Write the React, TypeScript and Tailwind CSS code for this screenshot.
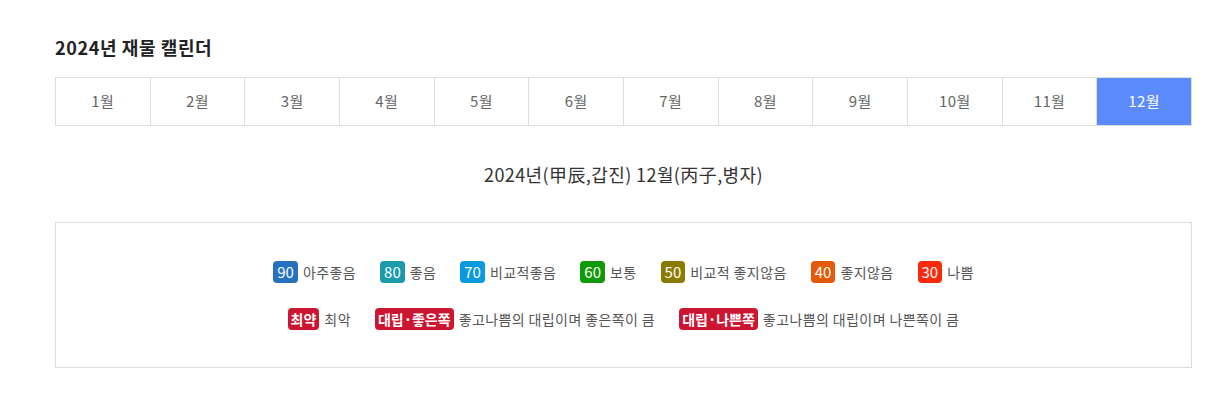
const months = ['1월', '2월', '3월', '4월', '5월', '6월', '7월', '8월', '9월', '10월', '11월', '12월'];

const scores = [
  { n: '90', label: '아주좋음', bg: 'bg-[#2672c0]' },
  { n: '80', label: '좋음', bg: 'bg-[#1a9aaa]' },
  { n: '70', label: '비교적좋음', bg: 'bg-[#0b9ae0]' },
  { n: '60', label: '보통', bg: 'bg-[#109a06]' },
  { n: '50', label: '비교적 좋지않음', bg: 'bg-[#8a7a00]' },
  { n: '40', label: '좋지않음', bg: 'bg-[#e45a0a]' },
  { n: '30', label: '나쁨', bg: 'bg-[#fc2a0a]' },
];

const specials = [
  { tag: '최약', label: '최악' },
  { tag: '대립·좋은쪽', label: '좋고나쁨의 대립이며 좋은쪽이 큼' },
  { tag: '대립·나쁜쪽', label: '좋고나쁨의 대립이며 나쁜쪽이 큼' },
];

export default function App() {
  return (
    <div className="w-[1228px] h-[402px] bg-white pl-[55px] pr-[36px] pt-[35px] font-['Noto_Sans_CJK_KR','Noto_Sans',sans-serif]">
      <h2 className="text-[18px] font-bold text-[#222] leading-[24px] tracking-[0.6px]">2024년 재물 캘린더</h2>

      {/* month tabs */}
      <div className="mt-[18px] grid grid-cols-12 border-l border-t border-[#dddddd]">
        {months.map((m, i) => (
          <div
            key={m}
            className={`h-[48px] flex items-center justify-center text-[15px] tracking-[0.4px] border-r border-b border-[#dddddd] ${
              i === 11 ? 'bg-[#5b8afc] text-white border-[#5b8afc]' : 'text-[#666]'
            }`}
          >
            {m}
          </div>
        ))}
      </div>

      <p className="mt-[36px] text-center text-[18px] text-[#333] leading-[24px] tracking-[0.4px]">2024년(甲辰,갑진) 12월(丙子,병자)</p>

      {/* legend */}
      <div className="mt-[36px] h-[146px] border border-[#dddddd] flex flex-col items-center pt-[38px] gap-[25px]">
        <div className="flex items-center gap-[24px]">
          {scores.map((s) => (
            <div key={s.n} className="flex items-center gap-[5px]">
              <span className={`${s.bg} text-white text-[15px] leading-[22px] h-[22px] px-[4px] rounded-[4px]`}>{s.n}</span>
              <span className="text-[14px] text-[#555] tracking-[0.4px]">{s.label}</span>
            </div>
          ))}
        </div>
        <div className="flex items-center gap-[24px]">
          {specials.map((s) => (
            <div key={s.tag} className="flex items-center gap-[5px]">
              <span className="bg-[#cc1530] text-white text-[14px] font-bold leading-[22px] h-[22px] px-[3px] rounded-[4px]">{s.tag}</span>
              <span className="text-[14px] text-[#555] tracking-[0.4px]">{s.label}</span>
            </div>
          ))}
        </div>
      </div>
    </div>
  );
}
